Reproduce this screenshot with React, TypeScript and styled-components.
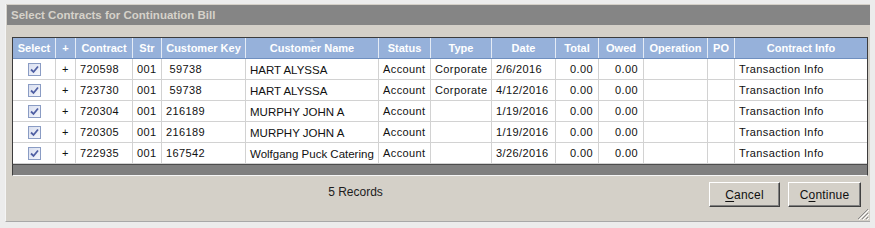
import * as React from 'react';
import styled, { createGlobalStyle } from 'styled-components';

const GlobalStyle = createGlobalStyle`
  html, body {
    margin: 0;
    padding: 0;
    background: #ececec;
  }
  body {
    font-family: 'Liberation Sans', Arial, sans-serif;
  }
`;

type Align = 'left' | 'center' | 'right';

interface Column {
  title: string;
  width: number;
  align: Align;
}

const columns: Column[] = [
  { title: 'Select', width: 43, align: 'center' },
  { title: '+', width: 20, align: 'center' },
  { title: 'Contract', width: 57, align: 'left' },
  { title: 'Str', width: 29, align: 'left' },
  { title: 'Customer Key', width: 84, align: 'left' },
  { title: 'Customer Name', width: 133, align: 'left' },
  { title: 'Status', width: 52, align: 'left' },
  { title: 'Type', width: 61, align: 'left' },
  { title: 'Date', width: 64, align: 'left' },
  { title: 'Total', width: 43, align: 'right' },
  { title: 'Owed', width: 45, align: 'right' },
  { title: 'Operation', width: 64, align: 'left' },
  { title: 'PO', width: 27, align: 'left' },
  { title: 'Contract Info', width: 132, align: 'left' },
];

const gridTemplate = columns.map((c) => `${c.width}px`).join(' ');

const rows = [
  ['720598', '001', ' 59738', 'HART ALYSSA', 'Account', 'Corporate', '2/6/2016', '0.00', '0.00', '', '', 'Transaction Info'],
  ['723730', '001', ' 59738', 'HART ALYSSA', 'Account', 'Corporate', '4/12/2016', '0.00', '0.00', '', '', 'Transaction Info'],
  ['720304', '001', '216189', 'MURPHY JOHN A', 'Account', '', '1/19/2016', '0.00', '0.00', '', '', 'Transaction Info'],
  ['720305', '001', '216189', 'MURPHY JOHN A', 'Account', '', '1/19/2016', '0.00', '0.00', '', '', 'Transaction Info'],
  ['722935', '001', '167542', 'Wolfgang Puck Catering', 'Account', '', '3/26/2016', '0.00', '0.00', '', '', 'Transaction Info'],
];

/**
 * Window frame
 */
const Window = styled.div`
  margin: 4px 5px 0 5px;
  width: 865px;
  height: 218px;
  box-sizing: border-box;
  background: #d4d0c8;
  border-left: 1px solid #f4f4f4;
  border-bottom: 1px solid #a8a8a8;
  display: flex;
  flex-direction: column;
  position: relative;
`;

const TitleBar = styled.div`
  height: 20px;
  margin: 1px 0 0 1px;
  background: #858585;
  color: #d6d2ca;
  font-weight: bold;
  font-size: 11.5px;
  line-height: 20px;
  padding-left: 4px;
  white-space: nowrap;
`;

const Body = styled.div`
  flex: 1;
  display: flex;
  flex-direction: column;
  padding: 12px 3px 0 6px;
`;

/**
 * Grid
 */
const Grid = styled.div`
  width: 856px;
  box-sizing: border-box;
  border: 1px solid #3c3c3c;
  border-bottom: none;
  background: #fff;
`;

const Row = styled.div<{ $header?: boolean }>`
  display: grid;
  grid-template-columns: ${gridTemplate};
  height: 21px;
  box-sizing: border-box;
  border-bottom: 1px solid ${({ $header }) => ($header ? '#6f8fbf' : '#d2d2d2')};
  background: ${({ $header }) => ($header ? '#96b1da' : '#fff')};
`;

const HeadCell = styled.div<{ $last?: boolean }>`
  position: relative;
  border-right: ${({ $last }) => ($last ? 'none' : '1px solid #e4ebf5')};
  color: #fff;
  font-weight: bold;
  font-size: 11px;
  line-height: 21px;
  text-align: center;
  white-space: nowrap;
  overflow: hidden;
`;

/* small sort glyph that sits above the header caption */
const SortMark = styled.span`
  position: absolute;
  top: 1px;
  left: 50%;
  margin-left: -3px;
  width: 0;
  height: 0;
  border-left: 3px solid transparent;
  border-right: 3px solid transparent;
  border-bottom: 3px solid #c6d2e6;
`;

const Cell = styled.div<{ $align: Align; $last?: boolean; $raised?: boolean }>`
  border-right: ${({ $last }) => ($last ? 'none' : '1px solid #d2d2d2')};
  color: #111;
  font-size: 11px;
  letter-spacing: 0.4px;
  line-height: ${({ $raised }) => ($raised ? '16px' : '21px')};
  padding: 0 ${({ $align }) => ($align === 'right' ? '5px' : '0')} 0
    ${({ $align }) => ($align === 'left' ? '4px' : '0')};
  text-align: ${({ $align }) => $align};
  white-space: pre;
  overflow: hidden;
  display: flex;
  align-items: ${({ $raised }) => ($raised ? 'flex-start' : 'center')};
  justify-content: ${({ $align }) =>
    $align === 'left' ? 'flex-start' : $align === 'right' ? 'flex-end' : 'center'};
`;

const NameText = styled.span`
  margin-top: 3px;
  letter-spacing: 0;
  font-size: 11.5px;
`;

const CheckBox = styled.span`
  width: 11px;
  height: 11px;
  border: 1px solid #8a9cc4;
  background: linear-gradient(135deg, #d9dff0 0%, #f4f6fb 100%);
  display: inline-flex;
  align-items: center;
  justify-content: center;
`;

const ScrollBand = styled.div`
  width: 856px;
  height: 12px;
  box-sizing: border-box;
  background: #7f7f7f;
  border-top: 1px solid #4c4c4c;
  border-left: 1px solid #3c3c3c;
  border-right: 1px solid #3c3c3c;
  border-bottom: 1px solid #f6f6f6;
`;

/**
 * Footer
 */
const Footer = styled.div`
  display: flex;
  align-items: flex-start;
  padding-top: 6px;
`;

const RecordCount = styled.div`
  flex: 1;
  text-align: center;
  font-size: 12px;
  color: #1c1c1c;
  padding: 3px 10px 0 0;
`;

const Buttons = styled.div`
  display: flex;
  gap: 8px;
  padding-right: 6px;
`;

const Button = styled.button<{ $width: number }>`
  width: ${({ $width }) => $width}px;
  height: 25px;
  box-sizing: border-box;
  background: #d4d0c8;
  border: 1px solid;
  border-color: #fff #404040 #404040 #fff;
  box-shadow: inset -1px -1px 0 #808080;
  font-family: 'Liberation Sans', Arial, sans-serif;
  font-size: 12px;
  color: #111;
  padding: 0;
  letter-spacing: 0.2px;

  u {
    text-decoration-thickness: 1px;
    text-underline-offset: 2px;
  }
`;

const Grip = styled.svg`
  position: absolute;
  right: 1px;
  bottom: 1px;
`;

const CheckIcon: React.FC = () => (
  <CheckBox>
    <svg width="9" height="9" viewBox="0 0 9 9">
      <path d="M1 4.5 L3.5 7 L8 1.5" fill="none" stroke="#4f5fa3" strokeWidth="1.8" />
    </svg>
  </CheckBox>
);

const App: React.FC = () => {
  return (
    <>
      <GlobalStyle />
      <Window>
        <TitleBar>Select Contracts for Continuation Bill</TitleBar>
        <Body>
          <Grid>
            <Row $header>
              {columns.map((c, i) => (
                <HeadCell key={c.title} $last={i === columns.length - 1}>
                  {c.title === 'Customer Name' && <SortMark />}
                  {c.title}
                </HeadCell>
              ))}
            </Row>
            {rows.map((r) => (
              <Row key={r[0]}>
                <Cell $align="center">
                  <CheckIcon />
                </Cell>
                <Cell $align="center">+</Cell>
                {r.map((v, i) => {
                  const col = columns[i + 2];
                  const isName = col.title === 'Customer Name';
                  return (
                    <Cell
                      key={col.title}
                      $align={col.align}
                      $last={i === r.length - 1}
                      $raised={isName}
                    >
                      {isName ? <NameText>{v}</NameText> : v}
                    </Cell>
                  );
                })}
              </Row>
            ))}
          </Grid>
          <ScrollBand />
          <Footer>
            <RecordCount>5 Records</RecordCount>
            <Buttons>
              <Button $width={71}>
                <u>C</u>ancel
              </Button>
              <Button $width={73}>
                C<u>o</u>ntinue
              </Button>
            </Buttons>
          </Footer>
        </Body>
        <Grip width="12" height="12" viewBox="0 0 12 12">
          <path d="M11 1 L1 11 M11 5 L5 11 M11 9 L9 11" stroke="#8a8a8a" strokeWidth="1" />
          <path d="M12 2 L2 12 M12 6 L6 12 M12 10 L10 12" stroke="#fff" strokeWidth="1" />
        </Grip>
      </Window>
    </>
  );
};

export default App;
